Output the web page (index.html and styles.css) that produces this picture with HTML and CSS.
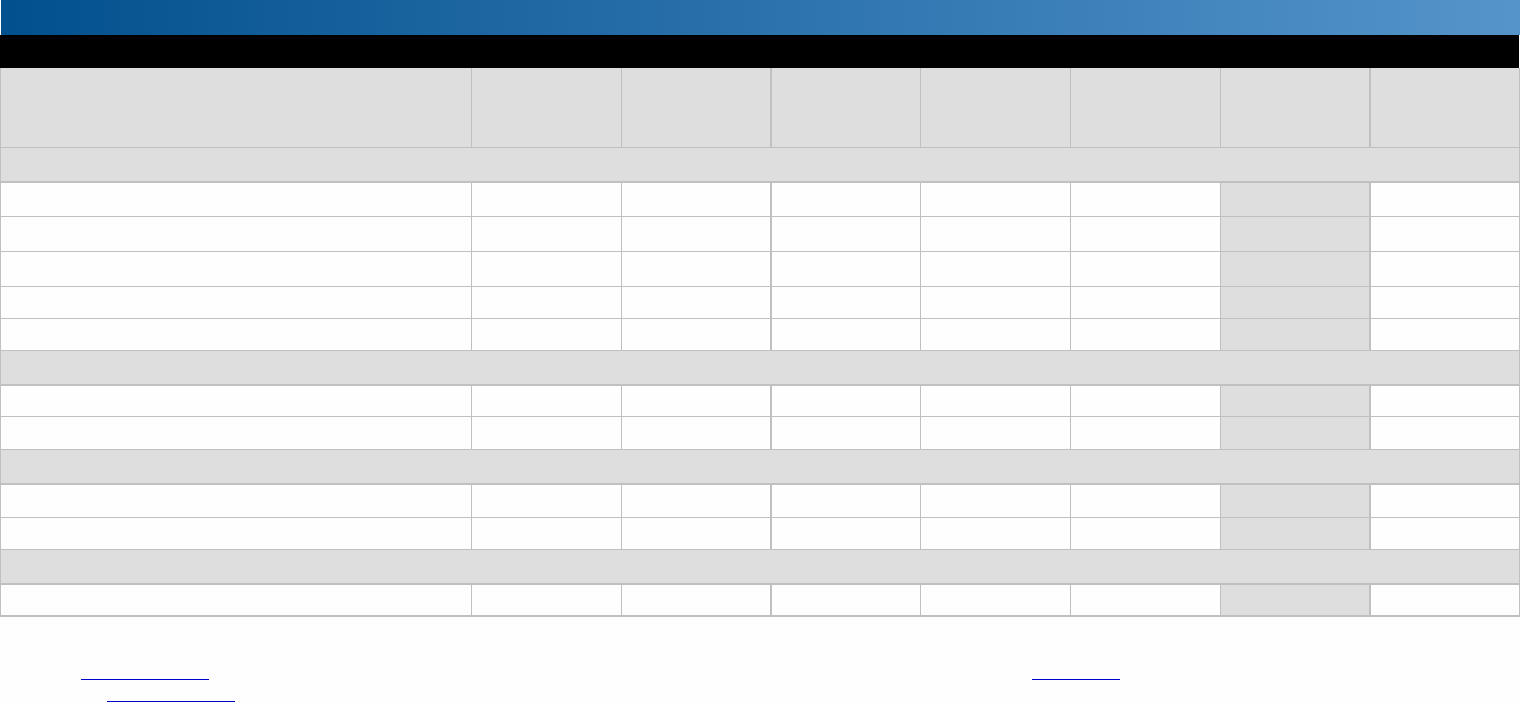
FILE: index.html
```html
<!DOCTYPE html>
<html lang="en">
<head>
<meta charset="utf-8">
<title>Report</title>
<link rel="stylesheet" href="styles.css">
</head>
<body>
<div class="banner"></div>
<div class="titlebar"></div>
<div class="sheet">
  <div class="row head">
    <div class="cell"></div><div class="cell"></div><div class="cell thick"></div><div class="cell"></div><div class="cell"></div><div class="cell"></div><div class="cell thick"></div><div class="cell"></div>
  </div>
  <div class="row section h35"><div class="cell span"></div></div>
  <div class="row data h34"><div class="cell"></div><div class="cell"></div><div class="cell thick"></div><div class="cell"></div><div class="cell"></div><div class="cell"></div><div class="cell thick shade"></div><div class="cell"></div></div>
  <div class="row data h35"><div class="cell"></div><div class="cell"></div><div class="cell thick"></div><div class="cell"></div><div class="cell"></div><div class="cell"></div><div class="cell thick shade"></div><div class="cell"></div></div>
  <div class="row data h35"><div class="cell"></div><div class="cell"></div><div class="cell thick"></div><div class="cell"></div><div class="cell"></div><div class="cell"></div><div class="cell thick shade"></div><div class="cell"></div></div>
  <div class="row data h32"><div class="cell"></div><div class="cell"></div><div class="cell thick"></div><div class="cell"></div><div class="cell"></div><div class="cell"></div><div class="cell thick shade"></div><div class="cell"></div></div>
  <div class="row data h32"><div class="cell"></div><div class="cell"></div><div class="cell thick"></div><div class="cell"></div><div class="cell"></div><div class="cell"></div><div class="cell thick shade"></div><div class="cell"></div></div>
  <div class="row section h35"><div class="cell span"></div></div>
  <div class="row data h31"><div class="cell"></div><div class="cell"></div><div class="cell thick"></div><div class="cell"></div><div class="cell"></div><div class="cell"></div><div class="cell thick shade"></div><div class="cell"></div></div>
  <div class="row data h33"><div class="cell"></div><div class="cell"></div><div class="cell thick"></div><div class="cell"></div><div class="cell"></div><div class="cell"></div><div class="cell thick shade"></div><div class="cell"></div></div>
  <div class="row section h35"><div class="cell span"></div></div>
  <div class="row data h33"><div class="cell"></div><div class="cell"></div><div class="cell thick"></div><div class="cell"></div><div class="cell"></div><div class="cell"></div><div class="cell thick shade"></div><div class="cell"></div></div>
  <div class="row data h32"><div class="cell"></div><div class="cell"></div><div class="cell thick"></div><div class="cell"></div><div class="cell"></div><div class="cell"></div><div class="cell thick shade"></div><div class="cell"></div></div>
  <div class="row section h35"><div class="cell span"></div></div>
  <div class="row data last h32"><div class="cell"></div><div class="cell"></div><div class="cell thick"></div><div class="cell"></div><div class="cell"></div><div class="cell"></div><div class="cell thick shade"></div><div class="cell"></div></div>
</div>
<div class="links first">
  <a class="link l1" href="#" aria-label="link"></a>
  <a class="link l3" href="#" aria-label="link"></a>
</div>
<div class="links second">
  <a class="link l2" href="#" aria-label="link"></a>
</div>
</body>
</html>
```
FILE: styles.css
```css
* { box-sizing: border-box; }
html, body { margin: 0; padding: 0; background: #fefefe; font-family: "Liberation Sans", Arial, sans-serif; overflow: hidden; }

.banner {
  margin-left: 1px;
  width: 1519px;
  height: 35px;
  background: linear-gradient(to right, #02508e 0%, #5594cb 100%);
}
.titlebar {
  width: 1519px;
  height: 33px;
  background: #000;
}

.sheet {
  width: 1520px;
  border-left: 1px solid #c0c0c0;
}
.row {
  display: grid;
  grid-template-columns: 471px 150px 150px 149px 150px 150px 150px 149px;
}
.cell {
  border-right: 1px solid #c0c0c0;
  border-bottom: 1px solid #c0c0c0;
  background: #fefefe;
}
.cell.thick { border-right-width: 2px; }
.cell.shade { background: #dedede; }
.head { height: 80px; }
.head .cell { background: #dedede; }
.section .cell.span {
  grid-column: 1 / -1;
  background: #dedede;
  border-bottom-width: 2px;
}
.last .cell { border-bottom-width: 2px; }
.h31 { height: 31px; }
.h32 { height: 32px; }
.h33 { height: 33px; }
.h34 { height: 34px; }
.h35 { height: 35px; }

.links {
  display: flex;
  align-items: flex-end;
}
.links.first { height: 63px; }
.links.second { height: 22px; }
.link {
  display: block;
  height: 1px;
  background: #0000cc;
}
.l1 { margin-left: 81px; width: 128px; }
.l3 { margin-left: 823px; width: 88px; }
.l2 { margin-left: 107px; width: 128px; }
```
